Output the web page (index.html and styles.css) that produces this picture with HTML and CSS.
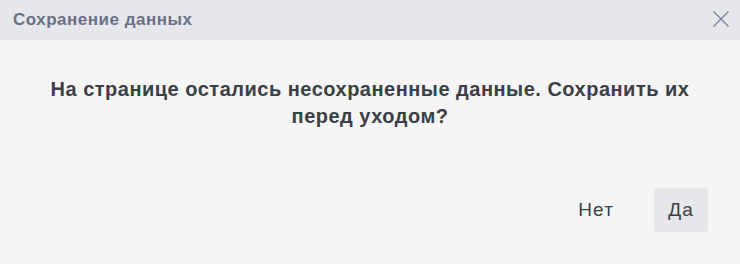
FILE: index.html
```html
<!DOCTYPE html>
<html>
<head>
    <title>Сохранение данных</title>
    <link rel="stylesheet" href="styles.css">
</head>
<body>
    <div class="dialog">
        <div class="dialog-header">
            <span class="dialog-title">Сохранение данных</span>
            <button class="close-btn" aria-label="Закрыть">
                <svg width="16" height="16" viewBox="0 0 16 16">
                    <path d="M0.5 0.5 L15.5 15.5 M15.5 0.5 L0.5 15.5" stroke="#7c8096" stroke-width="1.3" fill="none"/>
                </svg>
            </button>
        </div>
        <div class="dialog-body">
            <p class="message">На странице остались несохраненные данные. Сохранить их перед уходом?</p>
        </div>
        <div class="dialog-footer">
            <button class="btn">Нет</button>
            <button class="btn btn-primary">Да</button>
        </div>
    </div>
</body>
</html>
```

FILE: styles.css
```css
body {
    margin: 0;
    font-family: "Liberation Sans", Arial, sans-serif;
    background-color: #f5f5f5;
}
.dialog {
    width: 740px;
    height: 264px;
    display: flex;
    flex-direction: column;
    background-color: #f5f5f5;
}
.dialog-header {
    height: 40px;
    display: flex;
    align-items: center;
    justify-content: space-between;
    padding: 0 11px 0 13px;
    background-color: #e6e7eb;
}
.dialog-title {
    font-size: 17px;
    font-weight: bold;
    letter-spacing: 0.5px;
    color: #6b7088;
}
.close-btn {
    border: none;
    background: none;
    padding: 0;
    width: 16px;
    height: 16px;
    margin-top: -2px;
    cursor: pointer;
}
.close-btn svg {
    display: block;
}
.dialog-body {
    padding: 36px 40px 0;
}
.message {
    margin: 0;
    text-align: center;
    font-size: 20px;
    font-weight: bold;
    letter-spacing: 0.5px;
    line-height: 27px;
    color: #3b4046;
}
.dialog-footer {
    margin-top: auto;
    display: flex;
    justify-content: flex-end;
    gap: 26px;
    padding: 0 32px 32px 0;
}
.btn {
    height: 44px;
    padding: 0 14px;
    border: none;
    border-radius: 3px;
    background: none;
    font-family: "Liberation Sans", Arial, sans-serif;
    font-size: 19px;
    letter-spacing: 1.2px;
    color: #3b4046;
    cursor: pointer;
}
.btn-primary {
    background-color: #e6e7eb;
}
```
